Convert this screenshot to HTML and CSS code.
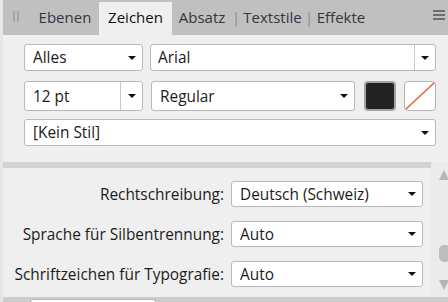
FILE: index.html
```html
<!DOCTYPE html>
<html>
<head>
<meta charset="utf-8">
<link rel="stylesheet" href="styles.css">
</head>
<body>
<div class="app">
  <div class="tabbar">
    <div class="grip"></div>
    <div class="tab t-ebenen">Ebenen</div>
    <div class="tab active t-zeichen">Zeichen</div>
    <div class="tab t-absatz">Absatz</div>
    <span class="sep">|</span>
    <div class="tab t-textstile">Textstile</div>
    <span class="sep">|</span>
    <div class="tab t-effekte">Effekte</div>
    <div class="menu">
      <svg width="12" height="11" viewBox="0 0 12 11"><rect x="0" y="1" width="12" height="2" fill="#6e6e6e"/><rect x="0" y="5" width="12" height="2" fill="#6e6e6e"/><rect x="0" y="9" width="12" height="2" fill="#6e6e6e"/></svg>
    </div>
  </div>

  <div class="top">
    <div class="row r1">
      <div class="box left">Alles<i class="caret"></i></div>
      <div class="box combo grow"><span>Arial</span><div class="btn"><i class="caret"></i></div></div>
    </div>
    <div class="row r2">
      <div class="box combo left"><span>12 pt</span><div class="btn"><i class="caret"></i></div></div>
      <div class="box grow">Regular<i class="caret"></i></div>
      <div class="swatch fill"></div>
      <div class="swatch none">
        <svg width="30" height="28" viewBox="0 0 30 28"><line x1="1" y1="27" x2="29" y2="1" stroke="#e5623a" stroke-width="1.6"/></svg>
      </div>
    </div>
    <div class="row r3">
      <div class="box grow">[Kein Stil]<i class="caret"></i></div>
    </div>
  </div>

  <div class="lower">
    <div class="lower-main">
      <div class="band"></div>
      <div class="form">
        <div class="frow"><span class="label">Rechtschreibung:</span><div class="box field">Deutsch (Schweiz)<i class="caret"></i></div></div>
        <div class="frow"><span class="label">Sprache für Silbentrennung:</span><div class="box field">Auto<i class="caret"></i></div></div>
        <div class="frow"><span class="label">Schriftzeichen für Typografie:</span><div class="box field">Auto<i class="caret"></i></div></div>
      </div>
    </div>
    <div class="scroll">
      <i class="arrow up"></i>
      <i class="thumb"></i>
      <i class="arrow down"></i>
    </div>
  </div>

  <div class="bottom"><div class="stub"></div></div>
</div>
</body>
</html>
```

FILE: styles.css
```css
* { box-sizing: border-box; }
html, body { margin: 0; padding: 0; }
body {
  width: 448px;
  height: 302px;
  overflow: hidden;
  background: #e6e6e6;
  font-family: "Open Sans", "Noto Sans", sans-serif;
  font-size: 15.4px;
  color: #1b1b1b;
}
.app {
  margin-left: 3px;
  height: 302px;
  display: flex;
  flex-direction: column;
  background: #efefef;
}

/* tab bar */
.tabbar {
  height: 35px;
  flex: none;
  background: #c0c0c0;
  display: flex;
  align-items: flex-end;
  padding-left: 10px;
  font-size: 15px;
}
.grip {
  align-self: flex-start;
  margin-top: 11px;
  width: 6px;
  height: 11px;
  border-left: 2px solid #a6a6a6;
  border-right: 2px solid #a6a6a6;
  margin-right: 12px;
}
.tab {
  height: 33px;
  line-height: 31px;
  color: #35353f;
  white-space: nowrap;
  text-align: center;
  flex: none;
}
.t-ebenen { width: 68px; }
.t-zeichen { width: 73px; }
.t-absatz { width: 60px; }
.t-textstile { width: 65px; }
.t-effekte { width: 56px; }
.tab.active {
  background: #efefef;
  color: #111;
}
.sep {
  width: 8px;
  height: 33px;
  line-height: 31px;
  text-align: center;
  color: #8c8c8c;
  flex: none;
}
.menu {
  margin-left: auto;
  margin-right: 3px;
  align-self: flex-start;
  margin-top: 9px;
  height: 11px;
}
.menu svg { display: block; }

/* top panel */
.top {
  height: 127px;
  flex: none;
  padding: 9px 12px 0 21px;
  display: flex;
  flex-direction: column;
}
.row { display: flex; gap: 7px; }
.r1 { height: 27px; }
.r2 { height: 30px; margin-top: 10px; gap: 8px; }
.r3 { height: 27px; margin-top: 8px; }

.box {
  background: #fff;
  border: 1px solid #b9b9b9;
  border-radius: 3px;
  display: flex;
  align-items: center;
  padding-left: 8px;
  white-space: nowrap;
}
.left { width: 119px; flex: none; }
.grow { flex: 1; }
.caret {
  width: 0;
  height: 0;
  border-left: 4px solid transparent;
  border-right: 4px solid transparent;
  border-top: 4px solid #111;
  margin-left: auto;
  margin-right: 6px;
}
.combo { padding-right: 0; }
.combo > span { flex: 1; }
.combo .btn {
  align-self: stretch;
  width: 21px;
  border-left: 1px solid #c9c9c9;
  display: flex;
  align-items: center;
  justify-content: center;
}
.combo .btn .caret { margin: 0; }
.r2 .combo .btn { width: 22px; }
.r1 .combo { padding-left: 7px; }

.swatch {
  width: 32px;
  flex: none;
  border-radius: 4px;
}
.swatch.fill {
  margin-left: 1px;
  background: #232323;
  border: 2px solid #a3a3a3;
}
.swatch.none {
  background: #fff;
  border: 1px solid #b4b4b4;
}
.swatch.none svg { display: block; }

/* lower panel */
.lower {
  flex: 1;
  display: flex;
  min-height: 0;
}
.lower-main {
  flex: 1;
  display: flex;
  flex-direction: column;
}
.band {
  height: 6px;
  background: #d3d3d3;
}
.form {
  padding-top: 13px;
  display: flex;
  flex-direction: column;
  gap: 14px;
}
.frow {
  display: flex;
  align-items: center;
  height: 26px;
  gap: 7px;
}
.label {
  width: 221px;
  text-align: right;
  white-space: nowrap;
}
.field {
  width: 192px;
  height: 26px;
  padding-left: 8px;
}
.scroll {
  width: 17px;
  flex: none;
  background: #ebebeb;
  overflow: hidden;
  display: flex;
  flex-direction: column;
}
.arrow {
  width: 0;
  height: 0;
  margin-left: 8px;
  border-left: 5px solid transparent;
  border-right: 5px solid transparent;
}
.arrow.up {
  margin-top: 8px;
  border-bottom: 10px solid #b5b5b5;
}
.thumb {
  margin-top: 65px;
  margin-left: 8px;
  width: 12px;
  height: 17px;
  border-radius: 5px;
  background: #bdbdbd;
}
.arrow.down {
  margin-top: 18px;
  border-top: 10px solid #b5b5b5;
}

.bottom {
  height: 5px;
  flex: none;
  background: #cdcdcd;
  padding: 2px 0 0 27px;
}
.stub {
  width: 126px;
  height: 3px;
  background: #fff;
  border: 1px solid #b9b9b9;
  border-bottom: none;
  border-radius: 3px 3px 0 0;
}
```
